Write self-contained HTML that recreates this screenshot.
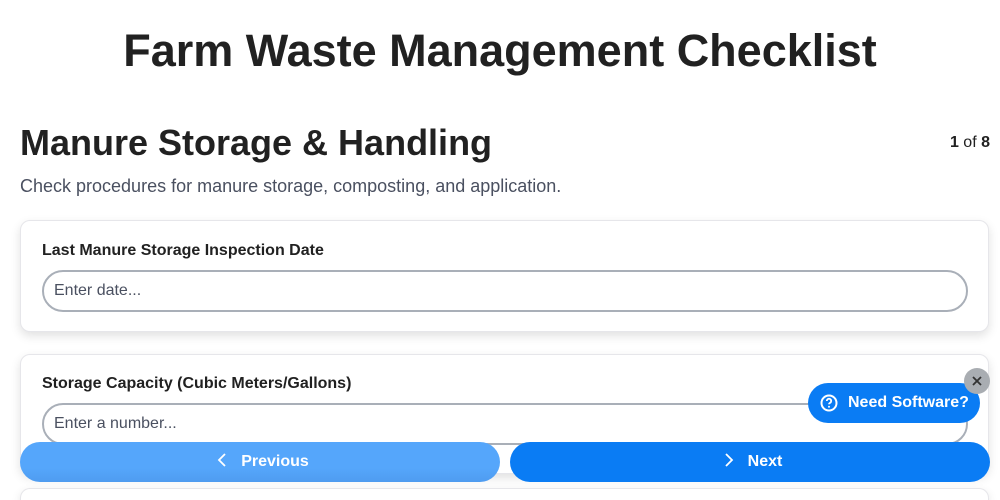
<!DOCTYPE html>
<html style="width:1000px;height:500px;overflow:hidden"><head><style>
*{box-sizing:border-box;margin:0;padding:0}
body{width:1000px;height:500px;overflow:hidden;background:#fff;font-family:"Liberation Sans",sans-serif;color:#212121;position:relative}
h1{position:absolute;top:25px;left:0;width:1000px;text-align:center;font-size:45px;font-weight:bold}
h2{position:absolute;top:122px;left:20px;font-size:36px;font-weight:bold}
.pg{position:absolute;top:134px;right:10px;font-size:16px}
.sub{position:absolute;top:176px;left:20px;font-size:18px;color:#4a5060}
.card{position:absolute;left:20px;width:969px;background:#fff;border:1px solid #e6e6ea;border-radius:10px;box-shadow:0 4px 10px rgba(0,0,0,.12)}
.lbl{position:absolute;left:21px;font-size:16px;font-weight:bold}
.inp{position:absolute;left:21px;width:926px;height:42px;border:2px solid #a9afb8;border-radius:21px;padding-left:10px;line-height:38px;font-size:16px;color:#4a5060}
.btn{position:absolute;top:442px;height:40px;border-radius:20px;color:#fff;font-weight:bold;font-size:16px;line-height:40px;text-align:center;padding-left:6px}
.btn svg{vertical-align:-2px;margin-right:14px}
.ns{position:absolute;left:808px;top:383px;width:172px;height:40px;border-radius:20px;background:#0a7cf4;color:#fff;font-weight:bold;font-size:16px;line-height:40px;padding-left:40px}
</style></head><body>
<h1>Farm Waste Management Checklist</h1>
<h2>Manure Storage &amp; Handling</h2>
<div class="pg"><b>1</b> of <b>8</b></div>
<div class="sub">Check procedures for manure storage, composting, and application.</div>
<div class="card" style="top:220px;height:112px"><div class="lbl" style="top:21px">Last Manure Storage Inspection Date</div><div class="inp" style="top:49px">Enter date...</div></div>
<div class="card" style="top:354px;height:120px"><div class="lbl" style="top:20px">Storage Capacity (Cubic Meters/Gallons)</div><div class="inp" style="top:48px">Enter a number...</div></div>
<div class="card" style="top:488px;height:12px;border-bottom:none;border-radius:10px 10px 0 0"></div>
<div class="btn" style="left:20px;width:480px;background:linear-gradient(#55a6fb 0,#55a6fb 65%,#4f9cf0 100%)"><svg width="10" height="16" viewBox="0 0 10 16"><path d="M8 2L2 8l6 6" fill="none" stroke="#fff" stroke-width="1.8"/></svg>Previous</div>
<div class="btn" style="left:510px;width:480px;background:#0a7cf4"><svg width="10" height="16" viewBox="0 0 10 16"><path d="M2 2l6 6-6 6" fill="none" stroke="#fff" stroke-width="1.8"/></svg>Next</div>
<div class="ns"><svg style="position:absolute;left:12px;top:11px" width="18" height="18" viewBox="0 0 18 18"><circle cx="9" cy="9" r="7.5" fill="none" stroke="#fff" stroke-width="2"/><path d="M6.8 7a2.2 2.2 0 1 1 3 2c-.6.3-.8.7-.8 1.3" fill="none" stroke="#fff" stroke-width="1.8"/><circle cx="9" cy="12.8" r="1" fill="#fff"/></svg>Need Software?</div>
<div style="position:absolute;left:964px;top:368px;width:26px;height:26px;border-radius:13px;background:#a9adb2"><svg width="26" height="26" viewBox="0 0 26 26"><path d="M9 9l8 8M17 9l-8 8" stroke="#333" stroke-width="1.8"/></svg></div>
</body></html>
